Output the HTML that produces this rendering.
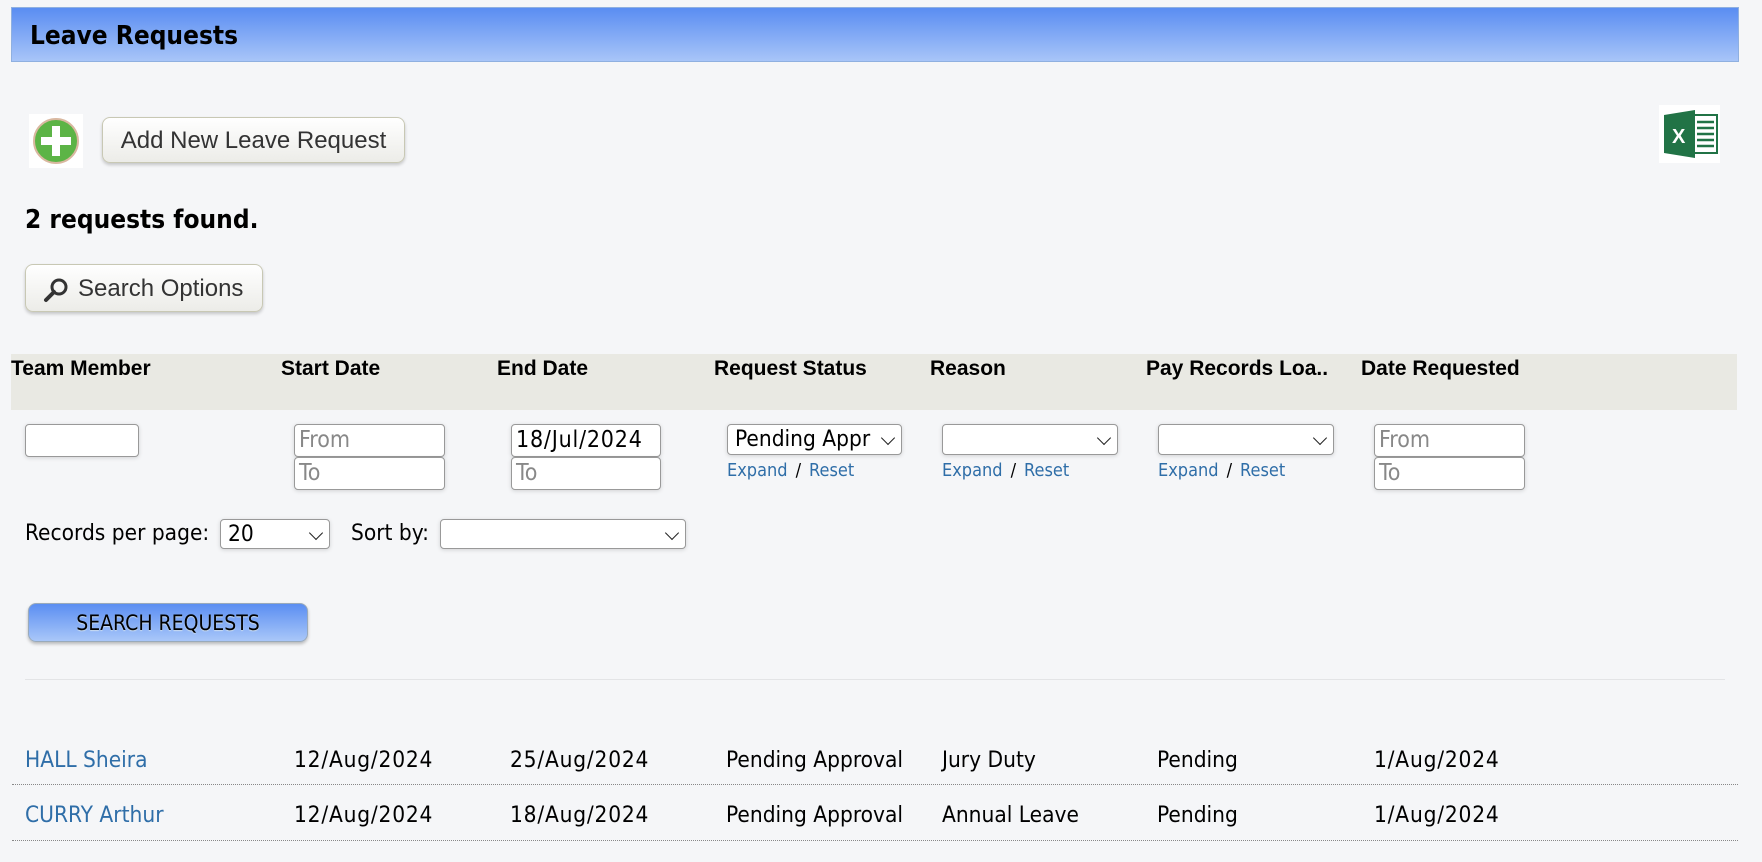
<!DOCTYPE html>
<html><head><meta charset="utf-8"><style>
*{box-sizing:border-box;margin:0;padding:0}
body{width:1762px;height:862px;background:#f5f6f8;position:relative;font-family:"DejaVu Sans","Liberation Sans",sans-serif;overflow:hidden}
.a{position:absolute}
.hdr{left:11px;top:7px;width:1728px;height:55px;background:linear-gradient(#5a8df2,#a8c5f8);border:1px solid #8fb0e0}
.hdr span{position:absolute;left:18px;top:13px;font-weight:bold;font-size:26px;color:#000;font-family:"DejaVu Sans Condensed","DejaVu Sans",sans-serif}
.btn{background:linear-gradient(#fff,#ecece8);border:1px solid #c8c8b4;border-radius:8px;box-shadow:0 2px 3px rgba(0,0,0,.2);font-family:"Liberation Sans",sans-serif;font-size:24px;color:#333}
.th{font-family:"Liberation Sans",sans-serif;font-weight:bold;font-size:21px;top:357px;color:#000}
.in{background:#fff;border:1px solid #999;border-radius:4px;height:33px;box-shadow:0 1px 4px rgba(0,0,0,.15);font-size:23px;color:#888;padding:2px 4px 0;font-family:"DejaVu Sans Condensed","DejaVu Sans",sans-serif;white-space:nowrap}
.sel{background:#fff;border:1px solid #999;border-radius:4px;height:31px;font-size:22.5px;color:#000;padding:1px 7px 0;font-family:"DejaVu Sans Condensed","DejaVu Sans",sans-serif;box-shadow:0 1px 4px rgba(0,0,0,.15);white-space:nowrap}
.sel i{position:absolute;right:8px;top:8px;width:10px;height:10px;border-right:1.6px solid #222;border-bottom:1.6px solid #222;transform:rotate(45deg)}
.lk{font-size:18px;color:#2f6ea8;top:460px;font-family:"DejaVu Sans Condensed","DejaVu Sans",sans-serif}
.lk b{font-weight:normal;color:#000;margin:0 8px}
.td{font-size:22.5px;font-family:"DejaVu Sans Condensed","DejaVu Sans",sans-serif;color:#000;white-space:nowrap}
.dt{letter-spacing:0.8px}
.blue{color:#2f6ea8}
.dot{left:12px;width:1726px;border-top:1.5px dotted #888}
</style></head><body>
<div class="a hdr"><span>Leave Requests</span></div>

<svg class="a" style="left:29px;top:114px" width="54" height="54" viewBox="0 0 54 54"><rect width="54" height="54" fill="#fff"/><circle cx="27" cy="27" r="22" fill="#5cb446" stroke="#d9b8a0" stroke-width="2"/><rect x="23" y="12" width="8" height="30" fill="#fff"/><rect x="12" y="23" width="30" height="8" fill="#fff"/></svg>
<div class="a btn" style="left:102px;top:117px;width:303px;height:46px;text-align:center;line-height:46px">Add New Leave Request</div>

<svg class="a" style="left:1659px;top:105px" width="61" height="58" viewBox="0 0 61 58"><rect width="61" height="58" fill="#fff"/><rect x="34" y="10" width="24" height="38" fill="#fff" stroke="#217346" stroke-width="2"/><g stroke="#217346" stroke-width="2.5"><line x1="38" y1="17" x2="55" y2="17"/><line x1="38" y1="23" x2="55" y2="23"/><line x1="38" y1="29" x2="55" y2="29"/><line x1="38" y1="35" x2="55" y2="35"/><line x1="38" y1="41" x2="55" y2="41"/></g><polygon points="5,10 36,5 36,53 5,48" fill="#217346"/><text x="13" y="38" font-family="Liberation Sans" font-weight="bold" font-size="20" fill="#fff">X</text></svg>

<div class="a" style="left:25px;top:205px;font-weight:bold;font-size:26px;font-family:'DejaVu Sans Condensed','DejaVu Sans',sans-serif">2 requests found.</div>
<div class="a btn" style="left:25px;top:264px;width:238px;height:48px;line-height:48px;padding-left:52px">Search Options</div>
<svg class="a" style="left:43px;top:276px" width="28" height="28" viewBox="0 0 28 28"><circle cx="16" cy="11" r="7" fill="none" stroke="#333" stroke-width="3"/><line x1="11" y1="16" x2="3" y2="24" stroke="#333" stroke-width="4" stroke-linecap="round"/></svg>

<div class="a" style="left:11px;top:354px;width:1726px;height:56px;background:#e9e9e3"></div>
<div class="a th" style="left:11px">Team Member</div>
<div class="a th" style="left:281px">Start Date</div>
<div class="a th" style="left:497px">End Date</div>
<div class="a th" style="left:714px">Request Status</div>
<div class="a th" style="left:930px">Reason</div>
<div class="a th" style="left:1146px">Pay Records Loa..</div>
<div class="a th" style="left:1361px">Date Requested</div>

<div class="a in" style="left:25px;top:424px;width:114px"></div>
<div class="a in" style="left:294px;top:424px;width:151px">From</div>
<div class="a in" style="left:294px;top:457px;width:151px">To</div>
<div class="a in dt" style="left:511px;top:424px;width:150px;color:#000">18/Jul/2024</div>
<div class="a in" style="left:511px;top:457px;width:150px">To</div>
<div class="a sel" style="left:727px;top:424px;width:175px">Pending Appr<i></i></div>
<div class="a lk" style="left:727px">Expand<b>/</b>Reset</div>
<div class="a sel" style="left:942px;top:424px;width:176px"><i></i></div>
<div class="a lk" style="left:942px">Expand<b>/</b>Reset</div>
<div class="a sel" style="left:1158px;top:424px;width:176px"><i></i></div>
<div class="a lk" style="left:1158px">Expand<b>/</b>Reset</div>
<div class="a in" style="left:1374px;top:424px;width:151px">From</div>
<div class="a in" style="left:1374px;top:457px;width:151px">To</div>

<div class="a td" style="left:25px;top:520px">Records per page:</div>
<div class="a sel" style="left:220px;top:519px;width:110px;height:30px">20<i></i></div>
<div class="a td" style="left:351px;top:520px">Sort by:</div>
<div class="a sel" style="left:440px;top:519px;width:246px;height:30px"><i></i></div>

<div class="a" style="left:28px;top:603px;width:280px;height:39px;border-radius:8px;background:linear-gradient(#5b8ef2,#a9c7f9);border:1px solid #9ab;box-shadow:0 2px 3px rgba(0,0,0,.25);text-align:center;line-height:38px;font-family:'DejaVu Sans Condensed','Liberation Sans',sans-serif;font-size:21px;color:#000;text-shadow:0 1px 1px #cde">SEARCH REQUESTS</div>

<div class="a" style="left:25px;top:679px;width:1700px;border-top:1px solid #e3e4e6"></div>

<div class="a td blue" style="left:25px;top:747px">HALL Sheira</div>
<div class="a td dt" style="left:294px;top:747px">12/Aug/2024</div>
<div class="a td dt" style="left:510px;top:747px">25/Aug/2024</div>
<div class="a td" style="left:726px;top:747px">Pending Approval</div>
<div class="a td" style="left:942px;top:747px">Jury Duty</div>
<div class="a td" style="left:1157px;top:747px">Pending</div>
<div class="a td dt" style="left:1374px;top:747px">1/Aug/2024</div>
<div class="a dot" style="top:784px"></div>
<div class="a td blue" style="left:25px;top:802px">CURRY Arthur</div>
<div class="a td dt" style="left:294px;top:802px">12/Aug/2024</div>
<div class="a td dt" style="left:510px;top:802px">18/Aug/2024</div>
<div class="a td" style="left:726px;top:802px">Pending Approval</div>
<div class="a td" style="left:942px;top:802px">Annual Leave</div>
<div class="a td" style="left:1157px;top:802px">Pending</div>
<div class="a td dt" style="left:1374px;top:802px">1/Aug/2024</div>
<div class="a dot" style="top:840px"></div>
</body></html>
